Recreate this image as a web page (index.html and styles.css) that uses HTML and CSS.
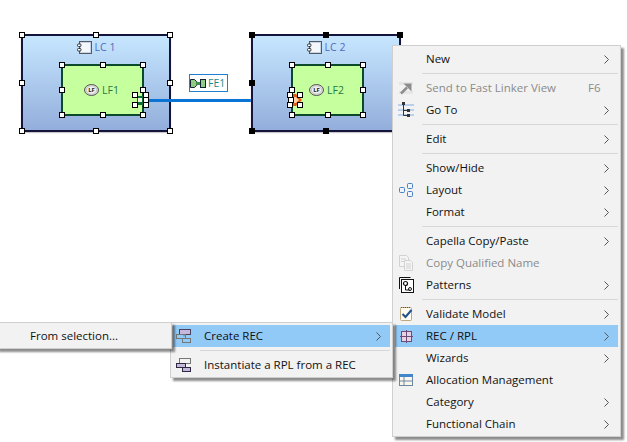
FILE: index.html
```html
<!DOCTYPE html>
<html lang="en">
<head>
<meta charset="utf-8">
<title>Capella diagram</title>
<link rel="stylesheet" href="styles.css">
</head>
<body>
<div class="canvas">
  <div class="node lc lc1">
    <div class="lc-label"><svg class="lc-icon" width="15" height="13" viewBox="0 0 15 13"><rect x="2.5" y="0.5" width="12" height="12" fill="#fff" stroke="#55585f"/><rect x="3.5" y="1.5" width="10" height="10" fill="#f4f7fb" stroke="#c9d3e6"/><rect x="0.5" y="3" width="3.5" height="2.5" rx="1" fill="#fff" stroke="#333"/><rect x="0.5" y="7.5" width="3.5" height="2.5" rx="1" fill="#fff" stroke="#333"/></svg><span>LC 1</span></div>
    <i class="h tl"></i><i class="h tm"></i><i class="h tr"></i><i class="h ml"></i><i class="h mr"></i><i class="h bl"></i><i class="h bm"></i><i class="h br"></i>
  </div>
  <div class="node lf lf1">
    <div class="lf-label"><svg class="lf-icon" width="15" height="12" viewBox="0 0 15 12"><ellipse cx="7.5" cy="6" rx="7" ry="5.5" fill="#d7dcd5" stroke="#555"/><ellipse cx="7.5" cy="6" rx="5" ry="4" fill="#f0f3ee" stroke="#aaa" stroke-width=".5"/><text x="7.5" y="8.4" class="lf-glyph">LF</text></svg><span>LF1</span></div>
    <i class="h tl"></i><i class="h tm"></i><i class="h tr"></i><i class="h ml"></i><i class="h mr"></i><i class="h bl"></i><i class="h bm"></i><i class="h br"></i>
  </div>
  <div class="link"></div>
  <div class="port port1"></div>
  <i class="h p1a"></i><i class="h p1b"></i><i class="h p1c"></i><i class="h p1d"></i><i class="h p1e"></i>
  <div class="fe-label"><svg width="16" height="9" viewBox="0 0 16 9"><path d="M.5 .5h4l2 2v4l-2 2h-4z" fill="#8fcb85" stroke="#123"/><rect x="6" y="3" width="6" height="3" fill="#3f8f4e"/><rect x="10.500" y=".5" width="5" height="8" fill="#8fcb85" stroke="#123"/><path d="M7 2.500l3 2-3 2z" fill="#3f8f4e"/></svg><span>FE1</span></div>

  <div class="node lc lc2 primary">
    <div class="lc-label"><svg class="lc-icon" width="15" height="13" viewBox="0 0 15 13"><rect x="2.5" y="0.5" width="12" height="12" fill="#fff" stroke="#55585f"/><rect x="3.5" y="1.5" width="10" height="10" fill="#f4f7fb" stroke="#c9d3e6"/><rect x="0.5" y="3" width="3.5" height="2.5" rx="1" fill="#fff" stroke="#333"/><rect x="0.5" y="7.5" width="3.5" height="2.5" rx="1" fill="#fff" stroke="#333"/></svg><span>LC 2</span></div>
    <i class="h tl"></i><i class="h tm"></i><i class="h tr"></i><i class="h ml"></i><i class="h bl"></i><i class="h bm"></i>
  </div>
  <div class="node lf lf2">
    <div class="lf-label"><svg class="lf-icon" width="15" height="12" viewBox="0 0 15 12"><ellipse cx="7.5" cy="6" rx="7" ry="5.5" fill="#d7dcd5" stroke="#555"/><ellipse cx="7.5" cy="6" rx="5" ry="4" fill="#f0f3ee" stroke="#aaa" stroke-width=".5"/><text x="7.5" y="8.4" class="lf-glyph">LF</text></svg><span>LF2</span></div>
    <i class="h tl"></i><i class="h tm"></i><i class="h tr"></i><i class="h ml"></i><i class="h mr"></i><i class="h bl"></i><i class="h bm"></i><i class="h br"></i>
  </div>
  <svg class="port2" width="12" height="12" viewBox="0 0 12 12"><path d="M0 0h6l6 6-6 6H0z" fill="#e25a12"/><path d="M2 3h4l3 3-3 3H2z" fill="#ffd0a8"/></svg>
  <i class="h p2a"></i><i class="h p2b"></i><i class="h p2c"></i><i class="h p2d"></i><i class="h p2e"></i>

  <div class="menu menu-main">
    <div class="row"><span class="ic"></span><span class="tx">New</span><span class="ar"><svg width="5" height="9" viewBox="0 0 5 9"><path d="M.5 .5l4 4-4 4" class="chev"/></svg></span></div>
    <div class="sep"></div>
    <div class="row off"><span class="ic"><svg width="16" height="16" viewBox="0 0 16 16"><rect x="1" y="2" width="14" height="3" fill="#e6e6e6"/><rect x="1" y="11" width="14" height="3" fill="#e6e6e6"/><path d="M3 13.500l6-6" stroke="#8d8d8d" stroke-width="2.500"/><path d="M5.500 3.500h8v8z" fill="#8d8d8d"/></svg></span><span class="tx">Send to Fast Linker View</span><span class="key">F6</span></div>
    <div class="row"><span class="ic"><svg width="16" height="16" viewBox="0 0 16 16"><rect x="0" y="2" width="16" height="2" fill="#b6d0ee"/><rect x="0" y="7" width="16" height="2" fill="#b6d0ee"/><rect x="0" y="12" width="16" height="2" fill="#b6d0ee"/><path d="M5.500 2v11.500h5M5.500 8.500h5" fill="none" stroke="#333"/><rect x="4" y="0" width="3" height="3" fill="#333"/><rect x="9" y="7" width="3" height="3" fill="#333"/><rect x="9" y="12" width="3" height="3" fill="#333"/></svg></span><span class="tx">Go To</span><span class="ar"><svg width="5" height="9" viewBox="0 0 5 9"><path d="M.5 .5l4 4-4 4" class="chev"/></svg></span></div>
    <div class="sep"></div>
    <div class="row"><span class="ic"></span><span class="tx">Edit</span><span class="ar"><svg width="5" height="9" viewBox="0 0 5 9"><path d="M.5 .5l4 4-4 4" class="chev"/></svg></span></div>
    <div class="sep"></div>
    <div class="row"><span class="ic"></span><span class="tx">Show/Hide</span><span class="ar"><svg width="5" height="9" viewBox="0 0 5 9"><path d="M.5 .5l4 4-4 4" class="chev"/></svg></span></div>
    <div class="row"><span class="ic"><svg width="16" height="16" viewBox="0 0 16 16"><g fill="#eef4fb" stroke="#4a7fbd"><rect x="1.500" y="5.500" width="5" height="5" rx="1"/><rect x="9.500" y="1.500" width="5" height="5" rx="1"/><rect x="9.500" y="9.500" width="5" height="5" rx="1"/></g></svg></span><span class="tx">Layout</span><span class="ar"><svg width="5" height="9" viewBox="0 0 5 9"><path d="M.5 .5l4 4-4 4" class="chev"/></svg></span></div>
    <div class="row"><span class="ic"></span><span class="tx">Format</span><span class="ar"><svg width="5" height="9" viewBox="0 0 5 9"><path d="M.5 .5l4 4-4 4" class="chev"/></svg></span></div>
    <div class="sep"></div>
    <div class="row"><span class="ic"></span><span class="tx">Capella Copy/Paste</span><span class="ar"><svg width="5" height="9" viewBox="0 0 5 9"><path d="M.5 .5l4 4-4 4" class="chev"/></svg></span></div>
    <div class="row off"><span class="ic"><svg width="16" height="16" viewBox="0 0 16 16"><g fill="#f4f4f4" stroke="#d2d2d2"><path d="M1.500 .5h7l2 2v9h-9z"/><path d="M6.500 5.500h6l2 2v8h-8z"/></g><path d="M3 4h5M3 6.500h3M8 9h5M8 11h5M8 13h5" stroke="#d2d2d2"/></svg></span><span class="tx">Copy Qualified Name</span></div>
    <div class="row"><span class="ic"><svg width="16" height="16" viewBox="0 0 16 16"><path d="M1.500 12V.5h11" fill="none" stroke="#111"/><rect x="3.500" y="2.500" width="12" height="13" fill="#fff" stroke="#111"/><circle cx="7.500" cy="6.500" r="2" fill="none" stroke="#111" stroke-width="1.200"/><path d="M7.500 8.500v4.500M7.500 13h4" fill="none" stroke="#111"/><circle cx="12" cy="12" r="1.500" fill="none" stroke="#111"/></svg></span><span class="tx">Patterns</span><span class="ar"><svg width="5" height="9" viewBox="0 0 5 9"><path d="M.5 .5l4 4-4 4" class="chev"/></svg></span></div>
    <div class="sep"></div>
    <div class="row"><span class="ic"><svg width="16" height="16" viewBox="0 0 16 16"><rect x="2.500" y="1.500" width="11" height="13" rx="1" fill="#fdfaf2" stroke="#bca981"/><path d="M3 1.500h10" stroke="#2a5fa8" stroke-dasharray="1 1"/><path d="M4.500 8l3 3 6-7" fill="none" stroke="#1f4f8f" stroke-width="2"/></svg></span><span class="tx">Validate Model</span><span class="ar"><svg width="5" height="9" viewBox="0 0 5 9"><path d="M.5 .5l4 4-4 4" class="chev"/></svg></span></div>
    <div class="row on"><span class="ic"><svg width="16" height="16" viewBox="0 0 16 16"><rect x="3.500" y="3.500" width="10" height="10" fill="#e6d2e2" stroke="#6d4a78"/><path d="M8.500 2v13M2 8.500h13" fill="none" stroke="#6d4a78"/></svg></span><span class="tx">REC / RPL</span><span class="ar"><svg width="5" height="9" viewBox="0 0 5 9"><path d="M.5 .5l4 4-4 4" class="chev"/></svg></span></div>
    <div class="row"><span class="ic"></span><span class="tx">Wizards</span><span class="ar"><svg width="5" height="9" viewBox="0 0 5 9"><path d="M.5 .5l4 4-4 4" class="chev"/></svg></span></div>
    <div class="row"><span class="ic"><svg width="16" height="16" viewBox="0 0 16 16"><rect x="1.500" y="2.500" width="13" height="11" fill="#fbf6ea" stroke="#6d86a5"/><rect x="1" y="2" width="14" height="3" fill="#3f86cc"/><path d="M1.500 9h13M6 5v9" stroke="#6d86a5"/></svg></span><span class="tx">Allocation Management</span></div>
    <div class="row"><span class="ic"></span><span class="tx">Category</span><span class="ar"><svg width="5" height="9" viewBox="0 0 5 9"><path d="M.5 .5l4 4-4 4" class="chev"/></svg></span></div>
    <div class="row"><span class="ic"></span><span class="tx">Functional Chain</span><span class="ar"><svg width="5" height="9" viewBox="0 0 5 9"><path d="M.5 .5l4 4-4 4" class="chev"/></svg></span></div>
  </div>

  <div class="menu menu-sub">
    <div class="row on"><span class="ic"><svg width="16" height="16" viewBox="0 0 16 16"><rect x="3.500" y="1.500" width="11" height="5" fill="#c5b8dc" stroke="#4a4060"/><path d="M8 6.500v2" stroke="#777"/><rect x=".5" y="6.500" width="9" height="4" fill="none" stroke="#777"/><rect x="6.500" y="10.500" width="8" height="4" fill="none" stroke="#777"/></svg></span><span class="tx">Create REC</span><span class="ar"><svg width="5" height="9" viewBox="0 0 5 9"><path d="M.5 .5l4 4-4 4" class="chev"/></svg></span></div>
    <div class="sep"></div>
    <div class="row"><span class="ic"><svg width="16" height="16" viewBox="0 0 16 16"><rect x="3.500" y="1.500" width="11" height="5" fill="none" stroke="#777"/><rect x=".5" y="6.500" width="9" height="4" fill="#c5b8dc" stroke="#2d2840"/><rect x="6.500" y="10.500" width="8" height="4" fill="#c5b8dc" stroke="#2d2840"/></svg></span><span class="tx">Instantiate a RPL from a REC</span></div>
  </div>

  <div class="menu menu-sel">
    <div class="row"><span class="ic"></span><span class="tx">From selection...</span></div>
  </div>
</div>
</body>
</html>
```
FILE: styles.css
```css
html, body { margin: 0; padding: 0; background: #fff; }
.canvas { position: relative; width: 627px; height: 442px; overflow: hidden; font-family: "Open Sans", "Liberation Sans", sans-serif; }

.node { position: absolute; box-sizing: border-box; display: flex; }
.lc { width: 150px; height: 98px; top: 34px; justify-content: center; border: 2px solid #14143c; background: linear-gradient(#c6e6ff, #93aedb); box-shadow: 0 1px 1px #c8c8c8; }
.lc1 { left: 21px; }
.lc2 { left: 251px; }
.lf { top: 64px; height: 52px; align-items: center; justify-content: center; border: 2px solid #0a4a28; background: #c6ff9e; }
.lf1 { left: 61px; width: 83px; }
.lf2 { left: 291px; width: 73px; }

.lc-label { display: flex; align-items: center; gap: 3px; height: 20px; margin-top: 1px; font-size: 10.5px; color: #5468bd; }
.lf-label { display: flex; align-items: center; gap: 3px; padding-right: 2px; font-size: 10.5px; color: #1f7a45; }
.lf-glyph { font-size: 6px; font-weight: 700; fill: #222; text-anchor: middle; }

.h { position: absolute; box-sizing: border-box; width: 6px; height: 6px; background: #fff; border: 1px solid #000; }
.primary > .h { background: #000; }
.tl, .tm, .tr { top: -4px; }
.ml, .mr { top: calc(50% - 3px); }
.bl, .bm, .br { bottom: -4px; }
.tl, .ml, .bl { left: -4px; }
.tm, .bm { left: calc(50% - 3px); }
.tr, .mr, .br { right: -4px; }

.link { position: absolute; left: 144px; top: 99px; width: 150px; height: 3px; background: #0a74d4; }
.port { position: absolute; left: 137px; top: 96px; width: 9px; height: 9px; background: #0d6b3a; }
.port::after { content: ""; position: absolute; left: 1px; top: 2px; width: 4px; height: 4px; background: #eaf5e2; }
.port2 { position: absolute; left: 290px; top: 94px; }
.p1a { left: 132px; top: 92px; }
.p1b { left: 143px; top: 92px; }
.p1c { left: 132px; top: 102px; }
.p1d { left: 143px; top: 102px; }
.p1e { left: 143px; top: 97px; }
.p2a { left: 287px; top: 92px; }
.p2b { left: 297px; top: 92px; }
.p2c { left: 287px; top: 102px; }
.p2d { left: 297px; top: 102px; }
.p2e { left: 288px; top: 97px; }

.fe-label { position: absolute; left: 189px; top: 74px; box-sizing: border-box; width: 39px; height: 18px; display: flex; align-items: center; gap: 2px; border: 1px solid #1f7fd0; background: #fff; font-size: 10.5px; color: #1d8a8a; }

.menu { position: absolute; box-sizing: border-box; display: flex; flex-direction: column; padding: 2px 2px 1px; background: #f2f2f2; border: 1px solid #cfcfcf; box-shadow: 3px 3px 2px rgba(0, 0, 0, .45); font-size: 11.5px; color: #111; }
.menu-main { left: 392px; top: 45px; width: 229px; z-index: 1; }
.menu-sub { left: 170px; top: 322px; width: 223px; z-index: 2; }
.menu-sel { left: -4px; top: 322px; width: 176px; z-index: 3; }

.row { display: flex; align-items: center; box-sizing: border-box; height: 22px; padding-bottom: 2px; flex: none; }
.ic { flex: none; width: 31px; height: 16px; display: flex; padding-left: 3px; box-sizing: border-box; position: relative; top: 1px; }
.tx { flex: 1; white-space: nowrap; }
.ar { flex: none; width: 14px; display: flex; position: relative; top: 1px; }
.key { flex: none; width: 30px; }
.chev { fill: none; stroke: #555; stroke-width: 1; }
.off { color: #8b8b8b; }
.on { background: #91c9f7; }
.sep { flex: none; height: 1px; margin: 3px 0 3px 27px; background: #d7d7d7; }
```
